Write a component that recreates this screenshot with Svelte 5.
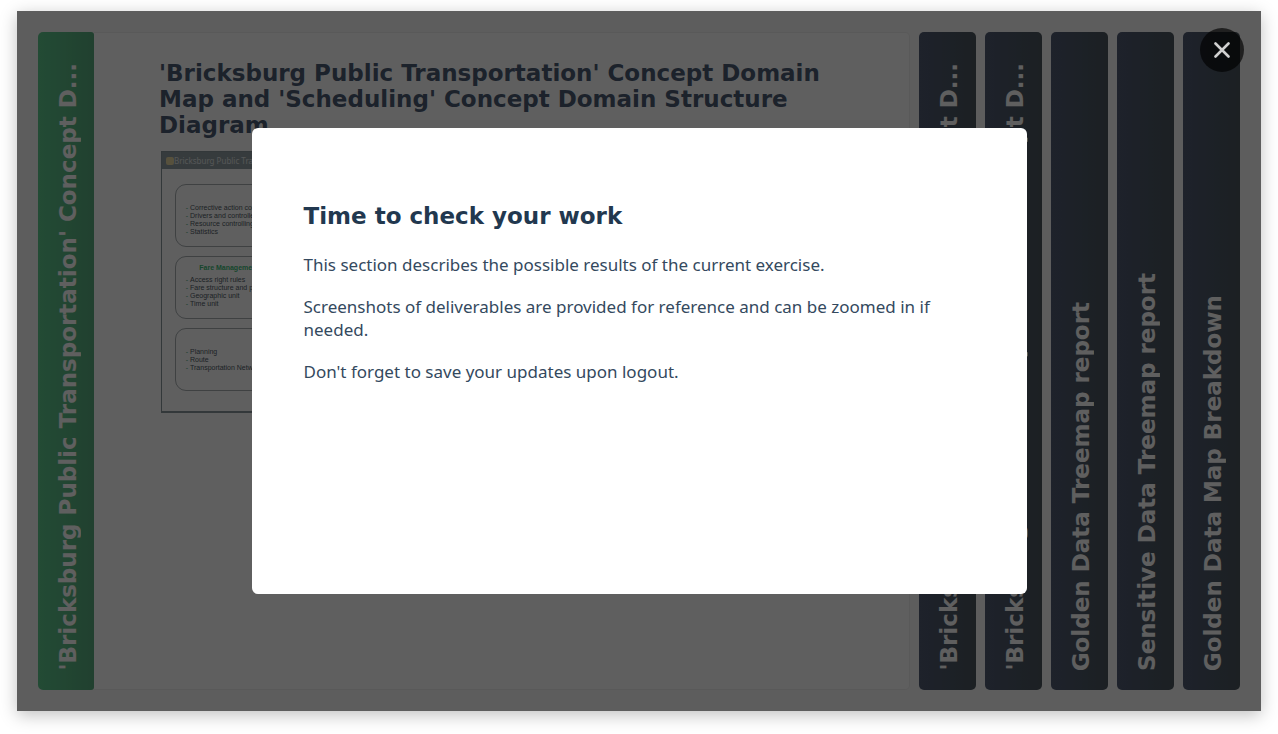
<script>
  const title = "'Bricksburg Public Transportation' Concept Domain Map and 'Scheduling' Concept Domain Structure Diagram";
  const shortTitle = "'Bricksburg Public Transportation' Concept D...";
  const tabs = [
    shortTitle,
    shortTitle,
    'Golden Data Treemap report',
    'Sensitive Data Treemap report',
    'Golden Data Map Breakdown'
  ];
  const groups = [
    { name: '', items: ['Corrective action control', 'Drivers and controllers', 'Resource controlling', 'Statistics'] },
    { name: 'Fare Management', items: ['Access right rules', 'Fare structure and prices', 'Geographic unit', 'Time unit'] },
    { name: '', items: ['Planning', 'Route', 'Transportation Network'] }
  ];
  let open = $state(true);
</script>

<main class="deck">
  <section class="active">
    <button class="tab current"><span>{shortTitle}</span></button>
    <article class="panel">
      <h2>{title}</h2>
      <div class="map">
        <div class="map-head"><i></i>Bricksburg Public Transportation</div>
        <div class="map-body">
          {#each groups as group}
            <div class="group" class:wide={!group.name}>
              <strong>{group.name}</strong>
              <ul>
                {#each group.items as item}<li>{item}</li>{/each}
              </ul>
            </div>
          {/each}
        </div>
      </div>
    </article>
  </section>
  {#each tabs as tab}
    <button class="tab"><span>{tab}</span></button>
  {/each}

  {#if open}
    <div class="overlay">
      <div class="modal" role="dialog" aria-modal="true" aria-labelledby="modal-title">
        <h2 id="modal-title">Time to check your work</h2>
        <p>This section describes the possible results of the current exercise.</p>
        <p>Screenshots of deliverables are provided for reference and can be zoomed in if needed.</p>
        <p>Don't forget to save your updates upon logout.</p>
      </div>
      <button class="close" aria-label="Close" onclick={() => (open = false)}>
        <svg viewBox="0 0 16 16" width="16" height="16" aria-hidden="true">
          <path d="M1.5 1.5 14.5 14.5M14.5 1.5 1.5 14.5" />
        </svg>
      </button>
    </div>
  {/if}
</main>

<style>
  :global(body) {
    background: #fff;
  }
  :global(#app) {
    display: flex;
    min-height: 100vh;
  }
  .deck {
    position: relative;
    display: flex;
    flex: 1;
    gap: 9px;
    min-width: 0;
    margin: 11px 17px 23px;
    padding: 21px;
    background: #f9f9f9;
    box-shadow: 0 4px 16px rgba(0, 0, 0, 0.25);
    font-family: 'DejaVu Sans', sans-serif;
  }
  .active {
    display: flex;
    flex: 1;
    min-width: 0;
  }
  .tab {
    display: flex;
    flex: none;
    align-items: flex-end;
    justify-content: center;
    width: 57px;
    padding: 19px 0 19px 3px;
    border: 0;
    border-radius: 5px;
    background: linear-gradient(90deg, #505b73, #4b565e);
    color: #fff;
    font: 700 23px/32px 'DejaVu Sans', sans-serif;
  }
  .tab span {
    writing-mode: vertical-rl;
    transform: rotate(180deg);
    white-space: nowrap;
  }
  .current {
    width: 56px;
    border-radius: 5px 3px 3px 5px;
    background: linear-gradient(90deg, #5ec98e, #58ac7e);
  }
  .panel {
    flex: 1;
    min-width: 0;
    padding: 27px 65px;
    border: 1px solid #eee;
    border-left: 0;
    border-radius: 0 5px 5px 0;
    background: #fff;
  }
  h2 {
    margin: 0;
    font-size: 23px;
    line-height: 26px;
  }
  .panel h2 {
    color: #4b5b73;
  }
  .map {
    margin: 13px 2px 0;
    border: 1px solid #8a979c;
    border-bottom-width: 2px;
    font: 7px/8px 'Liberation Sans', sans-serif;
    color: #505b66;
  }
  .map-head {
    display: flex;
    align-items: center;
    height: 17px;
    padding-left: 4px;
    background: #929fa3;
    color: #e4e8ea;
    font-size: 8px;
    font-family: 'Noto Sans', sans-serif;
  }
  .map-head i {
    width: 8px;
    height: 8px;
    border-radius: 2px;
    background: #e8d9a4;
  }
  .map-body {
    display: grid;
    gap: 9px;
    padding: 15px 13px 20px;
  }
  .group {
    box-sizing: border-box;
    width: 108px;
    min-height: 63px;
    padding: 7px 9px;
    border: 1px solid #a9afb2;
    border-radius: 11px;
  }
  .wide {
    width: 232px;
    padding-top: 11px;
  }
  .group strong {
    display: block;
    min-height: 4px;
    margin-bottom: 4px;
    color: #3ebd78;
    text-align: center;
  }
  .group ul {
    margin: 0;
    padding-left: 5px;
    list-style: '- ';
  }
  .group li {
    white-space: nowrap;
  }
  .group li::marker {
    color: #4aa57a;
  }
  .overlay {
    position: absolute;
    inset: 0;
    display: flex;
    align-items: center;
    justify-content: center;
    background: rgba(0, 0, 0, 0.627);
  }
  .modal {
    box-sizing: border-box;
    width: 62.3%;
    min-height: 66.6%;
    padding: 75px 52px;
    border-radius: 6px;
    background: #fff;
    color: #22384f;
  }
  .modal p {
    margin: 19px 0;
    color: #34495e;
    font: 17px/23px 'Noto Sans', sans-serif;
  }
  .modal h2 + p {
    margin-top: 24px;
  }
  .close {
    position: absolute;
    top: 17px;
    right: 17px;
    display: grid;
    place-items: center;
    width: 44px;
    height: 44px;
    padding: 0;
    border: 0;
    border-radius: 50%;
    background: rgba(0, 0, 0, 0.65);
  }
  .close path {
    fill: none;
    stroke: #d0d0d0;
    stroke-width: 2.6;
    stroke-linecap: round;
  }
</style>
